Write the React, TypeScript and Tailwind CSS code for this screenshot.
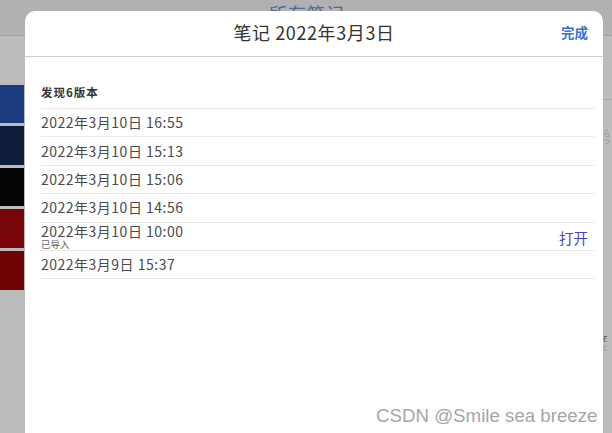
import React from "react";

const rows = [
  "2022年3月10日 16:55",
  "2022年3月10日 15:13",
  "2022年3月10日 15:06",
  "2022年3月10日 14:56",
];

export default function App() {
  return (
    <div className="relative w-[612px] h-[433px] overflow-hidden bg-[#bcbcbc] font-['Noto_Sans_CJK_SC','Noto_Sans',sans-serif]">
      {/* background app */}
      <div className="h-[36px] border-b border-[#a3a3a3] bg-[#b1b1b1] flex justify-center pt-[2px] pl-[2px]">
        <span className="text-[18px] leading-[22px] text-[#4f679a] tracking-[1px]">所有笔记</span>
      </div>
      <div className="flex justify-between">
        <div className="w-[24px] pt-[49px] flex flex-col gap-[3px]">
          <div className="h-[38px] bg-[#1a3c7e]" />
          <div className="h-[39px] bg-[#0e1d3b]" />
          <div className="h-[38px] bg-[#050505]" />
          <div className="h-[39px] bg-[#790606]" />
          <div className="h-[39px] bg-[#6e0303]" />
        </div>
        <div className="w-[9px] flex flex-col">
          <div className="h-[64px] border-b border-[#a9a9a9]" />
          <div className="pt-[30px] text-[7px] leading-[7px] text-[#8a8a8a]">ら<br />っ</div>
          <div className="pt-[190px] text-[8px] leading-[9px] text-[#555]">E<br /><span className="text-[#999]">c</span></div>
        </div>
      </div>

      {/* modal sheet */}
      <div className="absolute left-[25px] top-[11px] w-[578px] h-[440px] bg-white rounded-t-[10px] flex flex-col">
        <div className="h-[46px] shrink-0 border-b border-[#cdcdcd] grid grid-cols-[1fr_auto_1fr] items-center pb-[3px]">
          <div />
          <div className="text-[18px] text-[#333] leading-[24px] tracking-[0.6px]">笔记 2022年3月3日</div>
          <div className="flex justify-end pr-[15px]">
            <span className="text-[13.5px] font-semibold text-[#3874cf]">完成</span>
          </div>
        </div>
        <div className="pl-[16px] pr-[9px] flex flex-col">
          <div className="h-[51px] flex items-end pb-[7px]">
            <span className="text-[11.5px] font-semibold text-[#333] tracking-[1px]">发现6版本</span>
          </div>
          <div className="border-t border-[#e8e8e8]">
            {rows.map((r) => (
              <div key={r} className="h-[28.4px] border-b border-[#e8e8e8] flex items-center text-[14px] text-[#4a4a4a] tracking-[0.5px]">
                {r}
              </div>
            ))}
            <div className="h-[28.4px] border-b border-[#e8e8e8] flex items-center justify-between pr-[6px]">
              <div className="flex flex-col">
                <span className="text-[14px] leading-[16px] text-[#4a4a4a] tracking-[0.5px]">2022年3月10日 10:00</span>
                <span className="text-[9.5px] leading-[11px] text-[#666]">已导入</span>
              </div>
              <span className="text-[14.5px] text-[#4a41c6] pt-[4px]">打开</span>
            </div>
            <div className="h-[28.4px] border-b border-[#e8e8e8] flex items-center text-[14px] text-[#4a4a4a] tracking-[0.5px]">
              2022年3月9日 15:37
            </div>
          </div>
        </div>
      </div>

      {/* watermark */}
      <div className="absolute left-[376px] top-[404px] text-[18.7px] leading-[24px] text-[#a5a5a5] font-['Liberation_Sans',sans-serif] whitespace-nowrap">
        CSDN @Smile sea breeze
      </div>
    </div>
  );
}
